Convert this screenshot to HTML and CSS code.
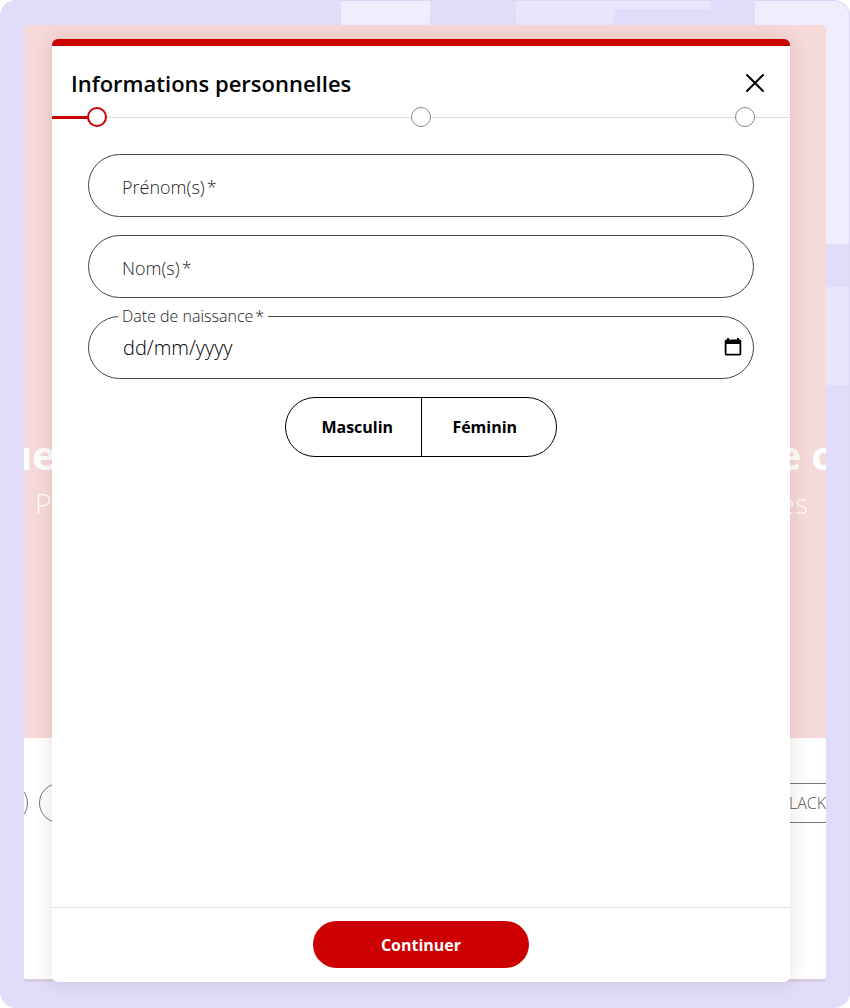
FILE: index.html
```html
<!DOCTYPE html>
<html lang="fr">

<head>
    <meta charset="utf-8">
    <title>Informations personnelles</title>
    <link rel="stylesheet" href="styles.css">
</head>

<body>
    <div class="frame">
        <!-- Page behind the dialog -->
        <div class="page" aria-hidden="true">
            <div class="hero">
                <div class="hero-title"><span>ue</span><span>e c</span></div>
                <div class="hero-text"><span>P</span><span>es</span></div>
            </div>
            <div class="chips">
                <span class="chip chip-first"></span>
                <span class="chip chip-wide"></span>
                <span class="chip chip-last">BLACK</span>
            </div>
        </div>

        <!-- Dialog -->
        <form class="dialog" role="dialog" aria-labelledby="dialogTitle">
            <header class="dialog-header">
                <h1 id="dialogTitle">Informations personnelles</h1>
                <button type="button" class="close-button" aria-label="Fermer">
                    <svg width="20" height="20" viewBox="0 0 20 20" fill="none" stroke="#000" stroke-width="2" stroke-linecap="round">
                        <path d="M2 2L18 18M18 2L2 18" />
                    </svg>
                </button>
            </header>

            <div class="steps">
                <span class="step active"></span>
                <span class="step"></span>
                <span class="step"></span>
            </div>

            <div class="fields">
                <div class="field">
                    <input type="text" id="firstName" required>
                    <label for="firstName">Prénom(s)<span class="star">*</span></label>
                </div>
                <div class="field">
                    <input type="text" id="lastName" required>
                    <label for="lastName">Nom(s)<span class="star">*</span></label>
                </div>
                <div class="field field-date">
                    <input type="text" id="birthDate" placeholder="dd/mm/yyyy" required>
                    <label for="birthDate">Date de naissance<span class="star">*</span></label>
                    <button type="button" class="calendar-button" aria-label="Choisir une date">
                        <svg width="18" height="20" viewBox="0 0 18 20">
                            <path fill="#000" fill-rule="evenodd" d="M3 1h2v1.500h8V1h2v1.500h.5a1.800 1.800 0 0 1 1.800 1.800v12.400a1.800 1.800 0 0 1-1.800 1.800h-13A1.800 1.800 0 0 1 .7 16.700V4.300a1.800 1.800 0 0 1 1.800-1.800H3zM2.500 7v9.800h13V7z" />
                        </svg>
                    </button>
                </div>
                <div class="gender">
                    <button type="button">Masculin</button>
                    <button type="button">Féminin</button>
                </div>
            </div>

            <footer class="dialog-footer">
                <button type="submit" class="submit-button">Continuer</button>
            </footer>
        </form>
    </div>
</body>

</html>
```
FILE: styles.css
```css
* {
    box-sizing: border-box;
}

body {
    margin: 0;
    background-color: #fff;
    color: #000;
    font-family: 'Open Sans', 'Noto Sans', sans-serif;
}

button,
input {
    font-family: inherit;
    color: inherit;
}

button {
    padding: 0;
    border: none;
    background: none;
    cursor: pointer;
}

.frame {
    position: relative;
    display: flex;
    min-height: 100vh;
    padding: 38px 59px 26px 52px;
    border: 1px solid #dcd6f7;
    border-width: 1px 1px 0 0;
    border-radius: 16px;
    background-color: #e1dcfa;
    /* light blocks along the top and right edges */
    background-image:
        linear-gradient(#f0edfd, #f0edfd),
        linear-gradient(#e9e6fb, #e9e6fb),
        linear-gradient(#f0edfd, #f0edfd),
        linear-gradient(#e9e6fb, #e9e6fb),
        linear-gradient(#e9e6fb, #e9e6fb);
    background-position: right 0 top 0, right 0 top 286px, 341px 0, 516px 0, 614px 0;
    background-size: 94px 243px, 94px 98px, 89px 25px, 98px 25px, 97px 8px;
    background-repeat: no-repeat;
}

/* Page behind */
.page {
    position: absolute;
    top: 24px;
    right: 23px;
    bottom: 29px;
    left: 24px;
    display: flex;
    flex-direction: column;
    overflow: hidden;
    border-radius: 5px 5px 2px 2px;
    background-color: #fff;
    box-shadow: 0 3px 0 #d9cde0;
}

.hero {
    height: 713px;
    padding-top: 402px;
    background-color: #f6d9d9;
    color: #fff;
}

.hero-title,
.hero-text {
    display: flex;
    justify-content: space-between;
}

.hero-title {
    margin: 0 -6px 0 -18px;
    font-size: 40px;
    line-height: 56px;
    font-weight: 700;
}

.hero-text {
    padding: 0 18px 0 11px;
    font-size: 28px;
    line-height: 40px;
    font-weight: 300;
}

.chips {
    display: flex;
    gap: 11px;
    margin: 45px -40px 0 -60px;
}

.chip {
    width: 64px;
    height: 40px;
    border: 1px solid #777;
    border-radius: 20px;
    font-size: 16px;
    line-height: 38px;
    font-weight: 300;
    color: #555;
}

.chip-wide {
    width: 160px;
}

.chip-last {
    width: 160px;
    margin-left: auto;
    padding-left: 72px;
}

/* Dialog */
.dialog {
    position: relative;
    display: flex;
    flex: 1;
    flex-direction: column;
    border-top: 7px solid #c00;
    border-radius: 6px;
    background-color: #fff;
    box-shadow: 0 0 20px rgba(90, 40, 20, 0.15);
}

.dialog-header {
    display: flex;
    align-items: center;
    justify-content: space-between;
    height: 61px;
    padding: 12px 25px 0 19px;
}

h1 {
    margin: 0;
    font-size: 22px;
    line-height: 32px;
    font-weight: 600;
}

.close-button {
    display: flex;
}

.steps {
    display: flex;
    align-items: center;
    justify-content: space-between;
    height: 20px;
    padding: 0 35px;
    background: linear-gradient(#ddd, #ddd) center / 100% 1px no-repeat;
}

.step {
    width: 20px;
    height: 20px;
    border: 1px solid #888;
    border-radius: 50%;
    background-color: #fff;
}

.step.active {
    position: relative;
    border: 2px solid #c00;
}

.step.active::before {
    content: '';
    position: absolute;
    top: 7px;
    right: 100%;
    width: 37px;
    height: 3px;
    background-color: #c00;
}

.fields {
    display: flex;
    flex: 1;
    flex-direction: column;
    gap: 18px;
    padding: 27px 36px;
}

.field {
    position: relative;
    display: flex;
}

.field input {
    width: 100%;
    height: 63px;
    padding: 0 64px 0 34px;
    border: 1px solid #444;
    border-radius: 32px;
    background-color: #fff;
    font-size: 20px;
    font-weight: 300;
}

.field input::placeholder {
    color: #000;
    opacity: 1;
}

.field label {
    position: absolute;
    top: 21px;
    left: 34px;
    font-size: 18px;
    line-height: 24px;
    font-weight: 300;
    color: #222;
}

.star {
    margin-left: 2px;
}

.field-date label {
    top: -12px;
    left: 30px;
    padding: 0 4px;
    background-color: #fff;
    font-size: 16px;
}

.calendar-button {
    position: absolute;
    top: 21px;
    right: 12px;
    display: flex;
}

.gender {
    display: flex;
    align-self: center;
    width: 272px;
    height: 60px;
    border: 1px solid #000;
    border-radius: 30px;
}

.gender button {
    flex: 1;
    padding: 0 0 0 8px;
    font-size: 16px;
    font-weight: 700;
}

.gender button + button {
    padding: 0 8px 0 0;
    border-left: 1px solid #000;
}

.dialog-footer {
    display: flex;
    justify-content: center;
    padding: 13px 0 14px;
    border-top: 1px solid #e4e4e4;
}

.submit-button {
    width: 216px;
    height: 47px;
    border-radius: 24px;
    background-color: #c00;
    color: #fff;
    font-size: 16px;
    font-weight: 700;
}
```
